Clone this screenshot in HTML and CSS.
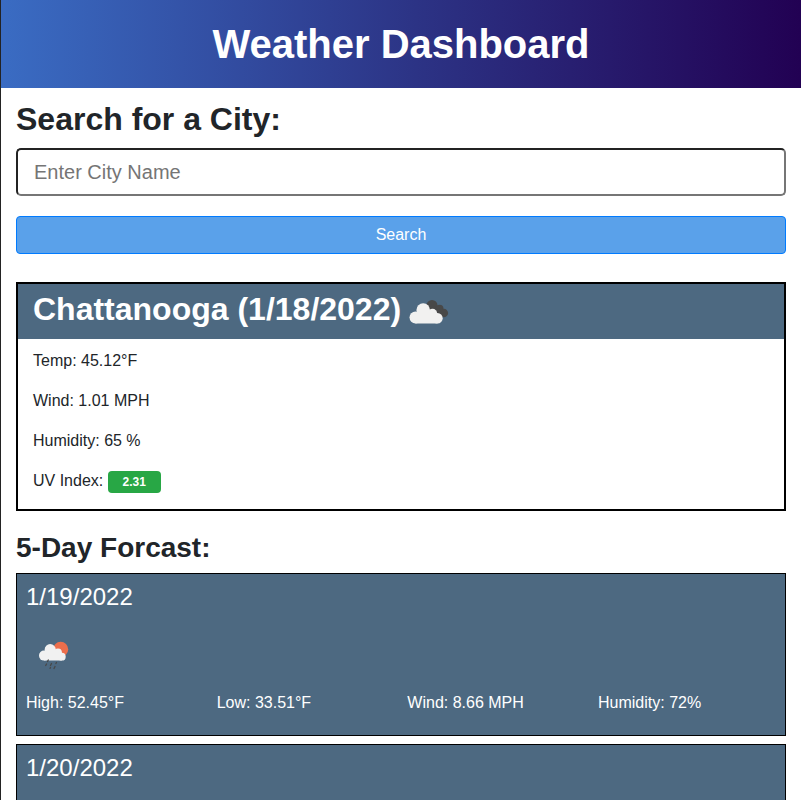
FILE: index.html
```html
<!DOCTYPE html>
<html lang="en">
<head>
<meta charset="utf-8">
<title>Weather Dashboard</title>
<link rel="stylesheet" href="styles.css">
</head>
<body>
<header class="page-header"><h1>Weather Dashboard</h1></header>
<main>
  <form class="search">
    <h2><label for="city">Search for a City:</label></h2>
    <input id="city" type="text" placeholder="Enter City Name">
    <button type="button">Search</button>
  </form>
  <section class="current">
    <div class="current-title">
      <h2>Chattanooga (1/18/2022)</h2>
      <svg class="current-icon" viewBox="9 9 40 26" aria-hidden="true">
        <g fill="#484848"><circle cx="32" cy="15.500" r="5.500"/><circle cx="39.500" cy="18.700" r="4"/><circle cx="43.800" cy="23" r="4.300"/><path d="M30 18h12v9H30z"/></g>
        <g fill="#f1f1f0"><circle cx="23.200" cy="20" r="6.800"/><circle cx="15.500" cy="27.500" r="6"/><circle cx="32.500" cy="23.500" r="4.700"/><circle cx="37.500" cy="28.300" r="5.200"/><path d="M15.500 22h17l5 3v8.500h-22z"/></g>
      </svg>
    </div>
    <div class="current-body">
      <p>Temp: 45.12°F</p>
      <p>Wind: 1.01 MPH</p>
      <p>Humidity: 65 %</p>
      <p>UV Index: <span class="badge">2.31</span></p>
    </div>
  </section>
  <section class="forecast">
    <h3>5-Day Forcast:</h3>
    <article class="day">
      <h4>1/19/2022</h4>
      <svg class="day-icon" viewBox="0 0 50 50" aria-hidden="true">
        <circle cx="34.700" cy="19.300" r="7.500" fill="#ec6e4c"/>
        <g fill="#f1f1f1"><circle cx="24.200" cy="19.700" r="5.600"/><circle cx="18" cy="25.600" r="5"/><circle cx="32" cy="22.300" r="3.900"/><circle cx="35.800" cy="26.700" r="3.900"/><path d="M18 21h14l4 3v6.600H18z"/></g>
        <path fill="none" stroke="#484848" stroke-width="1.300" stroke-linecap="round" d="M22.300 30l-.8 1.500M20.500 34l-.8 1.500M25.500 33.500l-1 2M30.500 32.500l-.6 1M24.500 37.500l-.5.8M29 36.500l-1 2"/>
      </svg>
      <div class="stats"><p>High: 52.45°F</p><p>Low: 33.51°F</p><p>Wind: 8.66 MPH</p><p>Humidity: 72%</p></div>
    </article>
    <article class="day"><h4>1/20/2022</h4></article>
  </section>
</main>
</body>
</html>
```
FILE: styles.css
```css
* { box-sizing: border-box; }
body {
  display: flex;
  flex-direction: column;
  margin: 0;
  height: 100vh;
  border-left: 1px solid #232323;
  background: #fff;
  color: #212529;
  font: 16px/24px "Liberation Sans", Arial, sans-serif;
}
h1, h2, h3, h4, p { margin: 0; }
.page-header {
  flex: none;
  height: 88px;
  padding-top: 20px;
  text-align: center;
  color: #fff;
  background: linear-gradient(to right, #3a6cc3, #2c3385 52%, #220153);
}
h1 { font-size: 40px; line-height: 48px; }
main { flex: 1; min-height: 0; overflow: hidden; padding: 12px 15px 0; }
h2 { font-size: 32px; line-height: 38px; }
.search { display: flex; flex-direction: column; }
.search input {
  height: 48px;
  margin: 10px 0 20px;
  padding: 8px 16px;
  border: 2px solid;
  border-color: #232323 #767676 #767676 #232323;
  border-radius: 5px;
  background: #fff;
  font: 20px/30px "Liberation Sans", Arial, sans-serif;
}
.search input::placeholder { color: #757575; }
.search button {
  height: 38px;
  border: 1px solid #007bff;
  border-radius: 4px;
  background: #5aa1ea;
  color: #fff;
  font: 16px/24px "Liberation Sans", Arial, sans-serif;
}
.current { height: 229px; margin-top: 28px; border: 2px solid #000; }
.current-title {
  display: flex;
  height: 55px;
  padding: 6px 15px;
  background: #4d6981;
  color: #fff;
}
.current-icon { width: 40px; height: 26px; margin: 9px 0 0 8px; }
.current-body { display: grid; row-gap: 16px; padding: 10px 15px; }
.badge {
  display: inline-block;
  width: 53px;
  height: 22px;
  border-radius: 4px;
  background: #28a745;
  color: #fff;
  font-size: 12px;
  font-weight: 700;
  line-height: 22px;
  text-align: center;
  vertical-align: baseline;
}
h3 { font-size: 28px; line-height: 34px; }
.forecast { display: grid; row-gap: 8px; margin-top: 20px; }
.day {
  height: 163px;
  padding: 8px 0 0 9px;
  border: 1px solid #000;
  background: #4d6981;
  color: #fff;
}
h4 { font-size: 24px; font-weight: 400; line-height: 29px; }
.day-icon { display: block; width: 50px; height: 50px; margin-top: 19px; }
.stats { display: grid; grid-template-columns: repeat(4, 1fr); margin: 11px -4px 0 0; }
.forecast { grid-template-columns: minmax(0, 1fr); }
.stats { width: 762.7px; }
.day { overflow: hidden; }
```
